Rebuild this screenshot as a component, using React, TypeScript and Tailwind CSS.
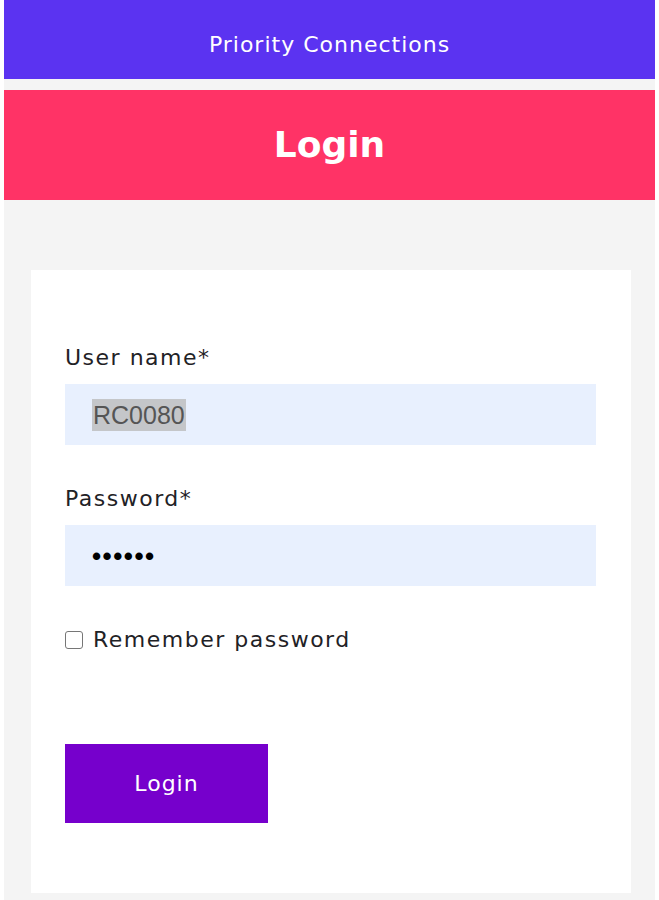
export default function App() {
  return (
    <div className="min-h-[900px] bg-white px-[4px] font-['DejaVu_Sans',sans-serif]">
      <div className="min-h-[900px] bg-[#f4f4f4]">
        <header className="flex h-[79px] items-center justify-center bg-[#5b33f1] pt-[10px]">
          <span className="text-[22px] tracking-[1px] text-white">Priority Connections</span>
        </header>
        <div className="mt-[11px] flex h-[110px] items-center justify-center bg-[#ff3366]">
          <h1 className="text-[36px] font-bold text-white">Login</h1>
        </div>
        <div className="pl-[27px] pr-[24px] pt-[70px]">
          <div className="bg-white px-[34px] pb-[70px] pt-[76px]">
            <label className="block text-[22px] leading-[24px] tracking-[1.5px] text-[#1f2226]">User name*</label>
            <div className="mt-[14px] flex h-[61px] w-[531px] items-center bg-[#e8f0fe] px-[27px]">
              <span className="bg-[#c4c6c9] px-[1px] font-['Liberation_Sans',sans-serif] text-[25px] leading-[32px] text-[#555]">
                RC0080
              </span>
            </div>
            <label className="mt-[42px] block text-[22px] leading-[24px] tracking-[1.5px] text-[#1f2226]">Password*</label>
            <div className="mt-[14px] flex h-[61px] w-[531px] items-center bg-[#e8f0fe] px-[27px]">
              <span className="font-['Liberation_Sans',sans-serif] text-[26px] font-bold leading-none tracking-[1.5px] text-black">••••••</span>
            </div>
            <div className="mt-[42px] flex items-center gap-[10px]">
              <span className="h-[18px] w-[18px] rounded-[3px] border-[1.5px] border-[#767676] bg-white" />
              <span className="text-[22px] leading-[24px] tracking-[1.5px] text-[#1f2226]">Remember password</span>
            </div>
            <button className="mt-[92px] flex h-[79px] w-[203px] items-center justify-center bg-[#7600cc] text-[22px] tracking-[1px] text-white">
              Login
            </button>
          </div>
        </div>
      </div>
    </div>
  )
}
